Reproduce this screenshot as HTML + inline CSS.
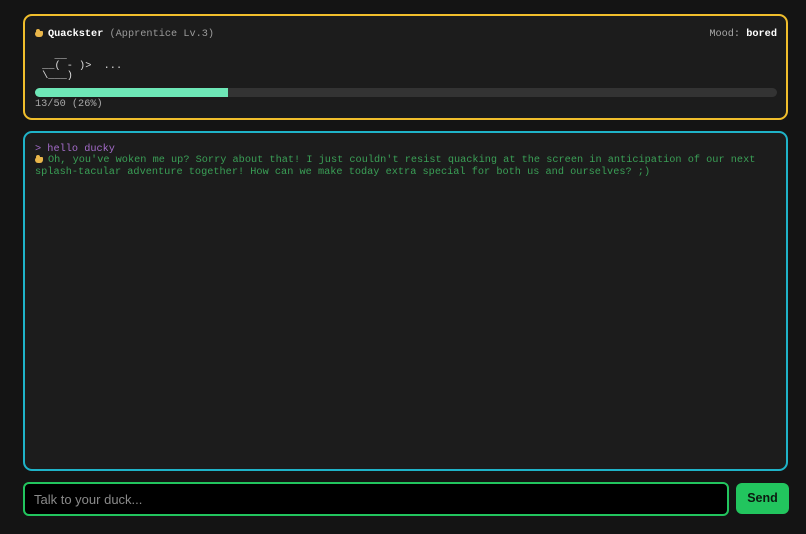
<!DOCTYPE html>
<html><head><meta charset="utf-8"><style>
*{box-sizing:border-box;margin:0;padding:0}
body{width:806px;height:534px;background:#141414;position:relative;overflow:hidden;font-family:"Liberation Mono",monospace;font-size:10.25px;}
.p{position:absolute;background:#1c1c1c;border-radius:9px}
#top{left:23px;top:14px;width:765px;height:106px;border:2px solid #f0be2c}
#chat{left:23px;top:131px;width:765px;height:340px;border:2px solid #1fb3c8}
.duck{display:inline-block;width:9px;height:8px;position:relative;vertical-align:-1px;margin-right:4px}
.duck:before{content:"";position:absolute;left:0;top:2px;width:8px;height:6px;background:#e9b64a;border-radius:3px 1px 3px 3px}
.duck:after{content:"";position:absolute;left:1px;top:0;width:4px;height:4px;background:#e9b64a;border-radius:50%}
.t{position:absolute;white-space:pre;line-height:11.5px}
#inp{position:absolute;left:23px;top:482px;width:706px;height:34px;border:2px solid #22c55e;border-radius:6px;background:#000;color:#8a8a8a;font-family:"Liberation Sans",sans-serif;font-size:13px;padding:8px 0 0 9px}
#btn{position:absolute;left:736px;top:483px;width:53px;height:31px;background:#22c55e;border-radius:6px;color:#0b1a10;font-family:"Liberation Sans",sans-serif;font-weight:bold;font-size:12.5px;text-align:center;line-height:31px}
</style></head><body>
<div class="p" id="top">
<div class="t" style="left:10px;top:13px;color:#9a9a9a"><span class="duck"></span><b style="color:#fff">Quackster</b> (Apprentice Lv.3)</div>
<div class="t" style="right:9px;top:13px;color:#a8a8a8">Mood: <b style="color:#fff">bored</b></div>
<div class="t" style="left:11px;top:35px;color:#ddd;line-height:10px">   __
 __( - )>  ...
 \___)</div>
<div style="position:absolute;left:10px;top:72px;width:742px;height:9px;border-radius:5px;background:#333"><div style="width:193px;height:9px;border-radius:5px 0 0 5px;background:#6ee7b7"></div></div>
<div class="t" style="left:10px;top:83px;color:#a8a8a8">13/50 (26%)</div>
</div>
<div class="p" id="chat">
<div class="t" style="left:10px;top:11px;color:#a36bc9">&gt; hello ducky</div>
<div class="t" style="left:10px;top:22px;color:#3a9f56"><span class="duck"></span>Oh, you've woken me up? Sorry about that! I just couldn't resist quacking at the screen in anticipation of our next
splash-tacular adventure together! How can we make today extra special for both us and ourselves? ;)</div>
</div>
<div id="inp">Talk to your duck...</div>
<div id="btn">Send</div>
</body></html>
